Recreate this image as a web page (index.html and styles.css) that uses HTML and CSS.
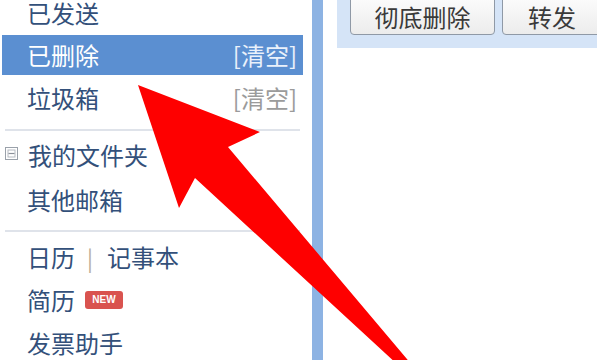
FILE: index.html
```html
<!DOCTYPE html>
<html lang="zh-CN">
<head>
<meta charset="utf-8">
<title>邮箱</title>
<link rel="stylesheet" href="styles.css">
</head>
<body>
<div class="page">
  <aside class="sidebar">
    <ul class="group group-mail">
      <li class="row"><span class="label">已发送</span></li>
      <li class="row selected"><span class="label">已删除</span><span class="clear">[清空]</span></li>
      <li class="row"><span class="label">垃圾箱</span><span class="clear gray">[清空]</span></li>
    </ul>
    <div class="sep sep-1"></div>
    <ul class="group group-folder">
      <li class="row folder">
        <svg class="toggle" width="13" height="13" viewBox="0 0 13 13" aria-hidden="true">
          <rect x="0.5" y="0.5" width="12" height="12" fill="#fff" stroke="#9aa1aa"/>
          <rect x="3" y="3" width="7" height="7" fill="none" stroke="#b5bac1"/>
          <path d="M3.5 6.5h6" stroke="#8a9099" stroke-width="1.2"/>
        </svg>
        <span class="label">我的文件夹</span>
      </li>
      <li class="row"><span class="label">其他邮箱</span></li>
    </ul>
    <div class="sep sep-2"></div>
    <ul class="group group-tools">
      <li class="row"><span class="label">日历</span><span class="pipe">|</span><span class="label">记事本</span></li>
      <li class="row"><span class="label">简历</span><span class="badge">NEW</span></li>
      <li class="row"><span class="label">发票助手</span></li>
    </ul>
  </aside>
  <div class="divider"></div>
  <main class="content">
    <div class="toolbar">
      <button class="btn btn-delete">彻底删除</button>
      <button class="btn btn-forward">转发</button>
    </div>
  </main>
  <svg class="arrow" width="597" height="360" viewBox="0 0 597 360" aria-hidden="true">
    <polygon points="138,85 260,132 228,147 412,365 398,365 195,178 179,208" fill="#fe0000"/>
  </svg>
</div>
</body>
</html>
```

FILE: styles.css
```css
html, body {
  margin: 0;
  padding: 0;
  background: #ffffff;
}

body {
  font-family: "Noto Sans CJK SC", "Noto Sans", sans-serif;
  overflow: hidden;
}

.page {
  position: relative;
  display: flex;
  width: 597px;
  height: 360px;
  overflow: hidden;
}

.sidebar {
  width: 312px;
  flex: none;
  display: flex;
  flex-direction: column;
}

.group {
  list-style: none;
  margin: 0;
  padding: 0 9px 0 2px;
  display: flex;
  flex-direction: column;
  gap: 3px;
}

.group-mail {
  margin-top: -7px;
}

.group-folder {
  margin-top: 4px;
  gap: 5px;
}

.group-tools {
  margin-top: 5px;
}

.row {
  height: 40px;
  flex: none;
  display: flex;
  align-items: center;
  padding: 0 6px 0 25px;
  font-size: 24px;
  line-height: 40px;
  color: #33507a;
}

.group-mail .row:first-child {
  height: 39px;
}

.row.selected {
  background: #5b8fd1;
  color: #ffffff;
}

.label {
  white-space: nowrap;
}

.clear {
  margin-left: auto;
  white-space: nowrap;
  color: #eaf1fb;
}

.clear.gray {
  color: #9b9b9b;
}

.row.folder {
  padding-left: 3px;
}

.toggle {
  flex: none;
  margin-right: 10px;
  margin-top: -3px;
}

.sep {
  height: 2px;
  margin: 0 12px 0 5px;
  background: #dfe3ea;
  flex: none;
}

.sep-1 {
  margin-top: 11px;
}

.sep-2 {
  margin-top: 10px;
}

.pipe {
  margin: 0 14px 0 12px;
  color: #b5ab98;
  font-size: 22px;
}

.badge {
  margin-left: 10px;
  width: 38px;
  height: 18px;
  border-radius: 3px;
  background: #d9534f;
  color: #ffffff;
  font-family: "Liberation Sans", Arial, sans-serif;
  font-size: 10px;
  font-weight: bold;
  line-height: 18px;
  text-align: center;
}

.divider {
  width: 11px;
  flex: none;
  background: #8db3e3;
}

.content {
  flex: 1;
  padding-left: 14px;
  display: flex;
  flex-direction: column;
}

.toolbar {
  height: 48px;
  flex: none;
  background: #d5e4f7;
  display: flex;
  align-items: flex-start;
  gap: 7px;
  padding-left: 13px;
}

.btn {
  margin-top: -6px;
  height: 41px;
  padding: 5px 0 0;
  border: 1px solid #8f99a6;
  border-radius: 4px;
  background: linear-gradient(#fdfdfd, #ececec);
  color: #3a3a3a;
  font-family: "Noto Sans CJK SC", "Noto Sans", sans-serif;
  font-size: 24px;
  line-height: 34px;
  flex: none;
}

.btn-delete {
  width: 145px;
}

.btn-forward {
  width: 100px;
}

.arrow {
  position: absolute;
  left: 0;
  top: 0;
  pointer-events: none;
}
```
